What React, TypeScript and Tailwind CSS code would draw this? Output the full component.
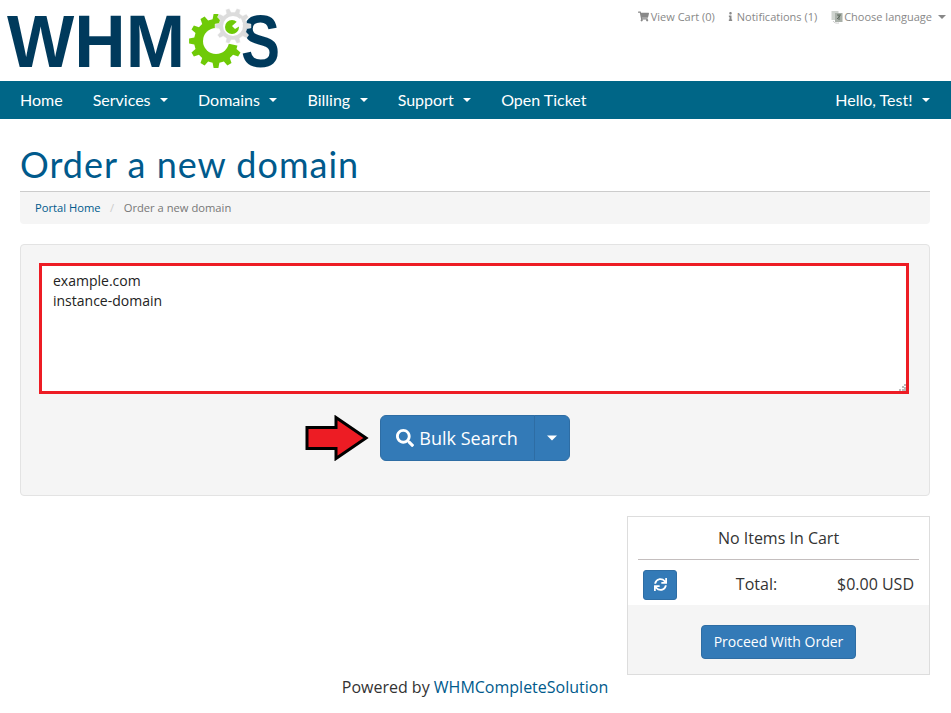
import React from 'react';
import { FaShoppingCart, FaInfo, FaSearch, FaSync } from 'react-icons/fa';

const gearPath = (cx: number, cy: number, outer: number, root: number, teeth: number) => {
    const pts: string[] = [];
    for (let i = 0; i < teeth; i++) {
        const a = (i / teeth) * Math.PI * 2;
        const s = (Math.PI * 2) / teeth;
        [[-0.3, root], [-0.17, outer], [0.17, outer], [0.3, root]].forEach(([o, r]) => {
            const t = a + o * s;
            pts.push(`${(cx + Math.cos(t) * r).toFixed(1)},${(cy + Math.sin(t) * r).toFixed(1)}`);
        });
    }
    return `M${pts.join('L')}Z`;
};

const Logo: React.FC = () => (
    <svg className="w-[300px] h-[84px] shrink-0" viewBox="0 0 300 84">
        <g fill="#003a5c" fontFamily="'Liberation Sans', sans-serif" fontWeight="700" fontSize="74">
            <text x="7" y="67" textLength="178" lengthAdjust="spacingAndGlyphs">WHM</text>
            <text x="241" y="67" textLength="39" lengthAdjust="spacingAndGlyphs">S</text>
        </g>
        <path d={gearPath(216, 41, 27, 22, 12)} fill="#6fca07" />
        <circle cx="216" cy="41" r="13" fill="#fff" />
        <path d="M216 41 L244 31 L244 47 Z" fill="#fff" />
        <path d={gearPath(233, 26, 18, 14, 10)} fill="#dcdcdc" stroke="#fff" strokeWidth="0.5" />
        <circle cx="233" cy="26" r="10" fill="#fff" />
        <circle cx="232" cy="27" r="7" fill="#6fca07" />
        <path d="M232 26 L241 18 L243 24 L235 29 Z" fill="#fff" />
    </svg>
);

const LanguageIcon: React.FC = () => (
    <svg className="w-[12px] h-[14px]" viewBox="0 0 12 14">
        <rect x="0.500" y="1" width="7" height="9" fill="#cfd4cf" />
        <rect x="4" y="3" width="7.500" height="9" fill="#a9b0a9" />
        <path d="M6 5h4M8 5v5M6 9l3-3" stroke="#5f6a5f" strokeWidth="1" fill="none" />
        <path d="M2 11c1 2 4 2.500 6 2" stroke="#ccc" fill="none" />
    </svg>
);

const Caret: React.FC<{ className?: string }> = ({ className }) => (
    <span className={`inline-block w-0 h-0 border-x-[4px] border-x-transparent border-t-[4px] ${className ?? 'border-t-white'}`} />
);

const NavItem: React.FC<{ label: string; caret?: boolean }> = ({ label, caret }) => (
    <a className="h-full px-[15px] flex items-center gap-[9.5px] text-[16px] text-white">
        {label}
        {caret && <Caret />}
    </a>
);

export default function App() {
    return (
        <div className="w-[951px] bg-white text-[#333] font-['Open_Sans',sans-serif]">
            <header className="h-[81px] flex justify-between items-start">
                <Logo />
                <div className="pt-[9px] pr-[5px] flex gap-[12px] text-[11px] leading-[15px] text-[#888]">
                    <span className="-mr-[1px] flex items-center gap-[2px]"><FaShoppingCart className="text-[11px]" />View Cart (0)</span>
                    <span className="mr-[2px] flex items-center gap-[2px]"><FaInfo className="text-[9px]" />Notifications (1)</span>
                    <span className="flex items-center gap-[1px]"><LanguageIcon />Choose language <Caret className="border-t-[#888] ml-[5px]" /></span>
                </div>
            </header>

            <nav className="h-[38px] bg-[#006687] flex justify-between pl-[5px] pr-[6px] font-['Lato',sans-serif]">
                <div className="flex">
                    <NavItem label="Home" />
                    <NavItem label="Services" caret />
                    <NavItem label="Domains" caret />
                    <NavItem label="Billing" caret />
                    <NavItem label="Support" caret />
                    <NavItem label="Open Ticket" />
                </div>
                <NavItem label="Hello, Test!" caret />
            </nav>

            <main className="pl-[20px] pr-[21px]">
                <h1 className="pt-[25px] h-[73px] border-b border-[#ccc] text-[36px] leading-[40px] tracking-[1px] font-normal text-[#005a8c] font-['Lato',sans-serif]">Order a new domain</h1>
                <div className="h-[32px] bg-[#f5f5f5] rounded-b-[4px] px-[15px] flex items-center gap-[9.500px] text-[11.200px]">
                    <a className="text-[#005a8c]">Portal Home</a>
                    <span className="text-[#ccc]">/</span>
                    <span className="text-[#777]">Order a new domain</span>
                </div>

                <section className="mt-[20px] h-[252px] bg-[#f5f5f5] border border-[#e3e3e3] rounded-[4px] pt-[18px] pl-[18px] pr-[20px]">
                    <div className="relative h-[131px] bg-white border-[3px] border-[#ed1c24] px-[11px] py-[5px] text-[14px] leading-[20px] text-[#222]">
                        <div>example.com</div>
                        <div>instance-domain</div>
                        <svg className="absolute right-0 bottom-0 w-[7px] h-[7px]" viewBox="0 0 7 7">
                            <path d="M5 0h2v2H5zM3 2h2v2H3zM5 3h2v2H5zM0 5h2v2H0zM3 5h2v2H3zM5 5h2v2H5z" fill="#bbb" />
                        </svg>
                    </div>
                    <div className="mt-[21px] pl-[1px] flex justify-center">
                        <div className="relative flex h-[46px] text-white">
                            <svg className="absolute left-[-75px] top-0 w-[64px] h-[46px]" viewBox="0 0 64 46">
                                <path d="M2 12.500H31V2.500L61 23L31 43.500V33.500H2Z" fill="#ed1c24" stroke="#000" strokeWidth="3" />
                            </svg>
                            <button className="w-[155px] bg-[#337ab7] border border-[#2e6da4] rounded-l-[6px] flex items-center justify-center gap-[5px] text-[18px]">
                                <FaSearch className="text-[18px]" />Bulk Search
                            </button>
                            <button className="w-[36px] -ml-px bg-[#337ab7] border border-[#2e6da4] rounded-r-[6px] flex items-center justify-center">
                                <Caret className="border-t-white scale-125" />
                            </button>
                        </div>
                    </div>
                </section>

                <div className="mt-[20px] flex justify-end">
                    <aside className="w-[303px] h-[159px] border border-[#ddd] flex flex-col">
                        <div className="mx-[10px] h-[43px] border-b border-[#c4bebe] flex items-center justify-center text-[16px] leading-[20px]">No Items In Cart</div>
                        <div className="h-[45px] pl-[15px] pr-[15px] pt-[4px] flex items-center justify-between text-[16px]">
                            <button className="w-[34px] h-[30px] bg-[#337ab7] border border-[#2e6da4] rounded-[3px] flex items-center justify-center text-white">
                                <FaSync className="text-[13px]" />
                            </button>
                            <span className="mr-[1px] -mt-[2px]">Total:</span>
                            <span className="-mt-[2px]">$0.00 USD</span>
                        </div>
                        <div className="flex-1 bg-[#f5f5f5] pt-[4px] flex items-center justify-center">
                            <button className="w-[155px] h-[34px] bg-[#337ab7] border border-[#2e6da4] rounded-[4px] text-white text-[14px]">Proceed With Order</button>
                        </div>
                    </aside>
                </div>

                <footer className="h-[38px] text-center text-[16px] leading-[24px]">
                    Powered by <a className="text-[#005a8c]">WHMCompleteSolution</a>
                </footer>
            </main>
        </div>
    );
}
